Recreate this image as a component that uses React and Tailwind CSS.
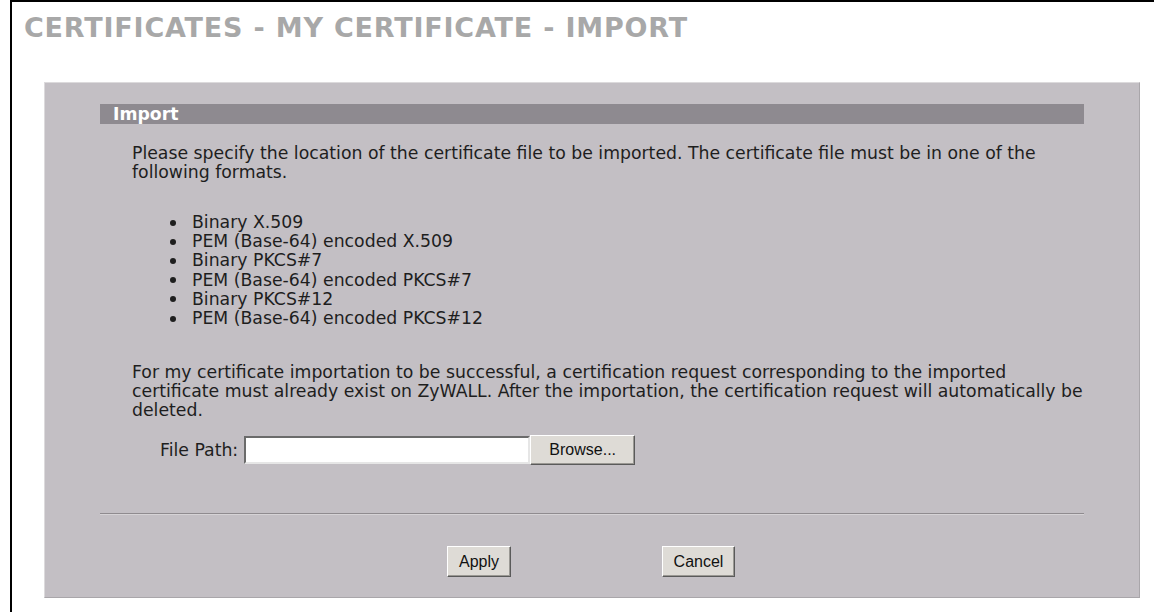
import React from "react";

const formats = [
  "Binary X.509",
  "PEM (Base-64) encoded X.509",
  "Binary PKCS#7",
  "PEM (Base-64) encoded PKCS#7",
  "Binary PKCS#12",
  "PEM (Base-64) encoded PKCS#12",
];

/* classic win32-style push button */
function WinButton({ children, className = "" }) {
  return (
    <button
      type="button"
      className={`bg-[#dedbd6] border border-t-white border-l-white border-r-[#5a5a5a] border-b-[#5a5a5a] shadow-[inset_-1px_-1px_0_#9a9893] text-[16px] leading-none text-[#111] font-['Liberation_Sans',Arial,sans-serif] flex items-center justify-center ${className}`}
    >
      {children}
    </button>
  );
}

export default function App() {
  return (
    <div className="w-[1154px] h-[612px] bg-white overflow-hidden">
      <div className="ml-[10px] h-full border-l-2 border-t-2 border-black">
        {/* page title */}
        <h1 className="pl-[12px] pt-[13px] text-[27px] leading-[26px] font-bold tracking-[0.8px] text-[#a8a8a8] font-['DejaVu_Sans',Verdana,sans-serif] whitespace-nowrap">
          CERTIFICATES - MY CERTIFICATE - IMPORT
        </h1>

        {/* grey panel */}
        <div className="ml-[32px] mt-[41px] w-[1096px] h-[516px] bg-[#c3bfc4] border border-t-[#dcdadc] border-l-[#dcdadc] border-r-[#a9a6aa] border-b-[#a9a6aa] pt-[21px] px-[55px] font-['DejaVu_Sans',Verdana,sans-serif] text-[17.3px] leading-[19px] text-[#1e1e1e]">
          <div className="h-[20px] bg-[#8e8a90] pl-[13px] flex items-center">
            <span className="text-white font-bold leading-[20px]">Import</span>
          </div>

          <div className="pl-[32px]">
            <p className="mt-[20px] whitespace-nowrap">
              Please specify the location of the certificate file to be imported. The certificate file must be in one of the
              <br />
              following formats.
            </p>

            <ul className="mt-[31px] pl-[38px]">
              {formats.map((f) => (
                <li key={f} className="flex items-center h-[19.2px] whitespace-nowrap">
                  <span className="w-[6px] h-[6px] rounded-full bg-[#1e1e1e] mr-[16px]" />
                  {f}
                </li>
              ))}
            </ul>

            <p className="mt-[35px] whitespace-nowrap">
              For my certificate importation to be successful, a certification request corresponding to the imported
              <br />
              certificate must already exist on ZyWALL. After the importation, the certification request will automatically be
              <br />
              deleted.
            </p>

            <div className="mt-[15px] flex items-center h-[30px]">
              <span className="ml-[28px] mr-[6px]">File Path:</span>
              <input
                type="text"
                className="w-[286px] h-[28px] bg-white border-2 border-t-[#6b6b6b] border-l-[#6b6b6b] border-r-[#e6e6e6] border-b-[#e6e6e6] outline-none"
              />
              <WinButton className="w-[105px] h-[30px]">Browse...</WinButton>
            </div>
          </div>

          <div className="mt-[48px] h-[2px] border-t border-t-[#8f8b8f] border-b border-b-[#d6d3d6]" />

          <div className="mt-[31px] flex">
            <WinButton className="ml-[347px] w-[64px] h-[31px]">Apply</WinButton>
            <WinButton className="ml-[151px] w-[73px] h-[31px]">Cancel</WinButton>
          </div>
        </div>
      </div>
    </div>
  );
}
